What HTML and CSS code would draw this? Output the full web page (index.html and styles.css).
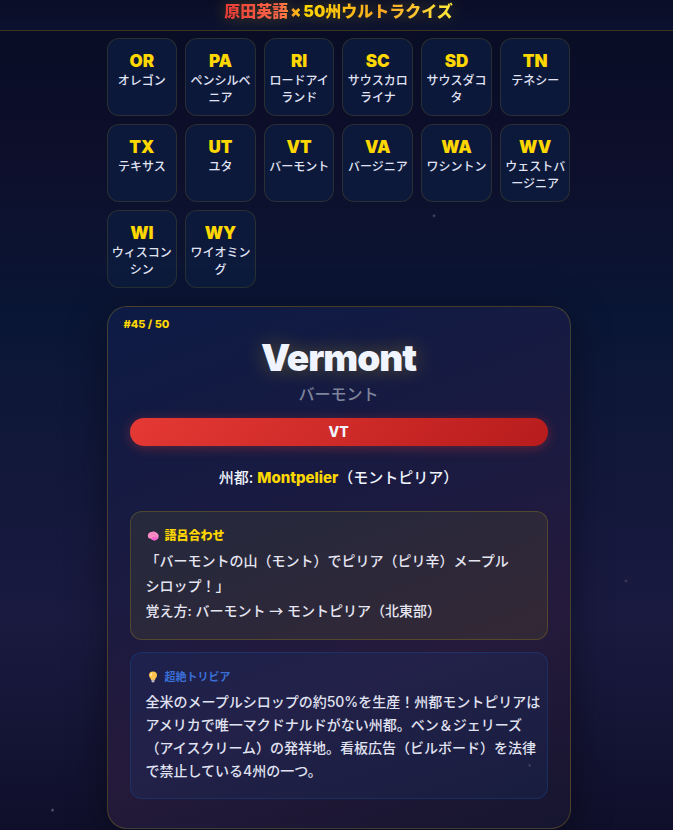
FILE: index.html
```html
<!DOCTYPE html>
<html lang="ja">
<head>
  <meta charset="UTF-8">
  <meta name="viewport" content="width=device-width, initial-scale=1.0">
  <title>原田英語×50州ウルトラクイズ</title>
  <link rel="stylesheet" href="styles.css">
</head>
<body>
  <!-- Header -->
  <header class="header">
    <h1 class="logo">原田英語<span class="times">×</span>50州ウルトラクイズ</h1>
  </header>

  <main class="container">
    <!-- State Grid -->
    <div class="state-grid">
      <button class="state-btn"><span class="abbr">OR</span><span class="name">オレゴン</span></button>
      <button class="state-btn"><span class="abbr">PA</span><span class="name">ペンシルベニア</span></button>
      <button class="state-btn"><span class="abbr">RI</span><span class="name">ロードアイランド</span></button>
      <button class="state-btn"><span class="abbr">SC</span><span class="name">サウスカロライナ</span></button>
      <button class="state-btn"><span class="abbr">SD</span><span class="name">サウスダコタ</span></button>
      <button class="state-btn"><span class="abbr">TN</span><span class="name">テネシー</span></button>
      <button class="state-btn"><span class="abbr">TX</span><span class="name">テキサス</span></button>
      <button class="state-btn"><span class="abbr">UT</span><span class="name">ユタ</span></button>
      <button class="state-btn"><span class="abbr">VT</span><span class="name">バーモント</span></button>
      <button class="state-btn"><span class="abbr">VA</span><span class="name">バージニア</span></button>
      <button class="state-btn"><span class="abbr">WA</span><span class="name">ワシントン</span></button>
      <button class="state-btn"><span class="abbr">WV</span><span class="name">ウェストバージニア</span></button>
      <button class="state-btn"><span class="abbr">WI</span><span class="name">ウィスコンシン</span></button>
      <button class="state-btn"><span class="abbr">WY</span><span class="name">ワイオミング</span></button>
    </div>

    <!-- Detail Card -->
    <article class="card">
      <div class="card-number">#45 / 50</div>
      <h2 class="state-en">Vermont</h2>
      <p class="state-ja">バーモント</p>
      <div class="badge">VT</div>
      <p class="capital">州都: <strong>Montpelier</strong>（モントピリア）</p>

      <section class="box goro">
        <h3 class="box-title">
          <svg class="icon" viewBox="0 0 24 24" aria-hidden="true">
            <path d="M2 13c-1-4 2-9 7-9 3-2 7-1 9 1 4 1 6 5 5 9 0 3-2 4-4 5-2 2-5 2-7 0-2 0-4-1-5-2-3 0-5-1-5-4z" fill="#ff8fc4"/>
            <path d="M8 17c3-2 8-3 14-2-1 3-3 5-6 6-4 0-7-1-8-4z" fill="#f55fd0"/>
            <path d="M5 13c1-3 3-4 5-3M9 6c2 0 3 2 2 4M14 5c-1 3 1 4 3 3M13 13c2-2 5-2 6 0M10 15h5" fill="none" stroke="#e068b4" stroke-width="1"/>
          </svg>
          語呂合わせ
        </h3>
        <p class="goro-text">「バーモントの山（モント）でピリア（ピリ辛）メープルシロップ！」<br>覚え方: バーモント <span class="arrow">→</span> モントピリア（北東部）</p>
      </section>

      <section class="box trivia">
        <h3 class="box-title">
          <svg class="icon" viewBox="0 0 24 24" aria-hidden="true">
            <path d="M12 1a8 8 0 0 0-8 8c0 4 4 5 4 9h8c0-4 4-5 4-9a8 8 0 0 0-8-8z" fill="#ffc44d"/>
            <path d="M10 4c-3 1-4 4-3 6 2 0 4-3 3-6z" fill="#fff3c4"/>
            <path d="M9 17h6v4l-2 2h-2l-2-2z" fill="#b9b4bd"/>
          </svg>
          超絶トリビア
        </h3>
        <p class="trivia-text">全米のメープルシロップの約50%を生産！州都モントピリアはアメリカで唯一マクドナルドがない州都。ベン＆ジェリーズ（アイスクリーム）の発祥地。看板広告（ビルボード）を法律で禁止している4州の一つ。</p>
      </section>
    </article>
  </main>
</body>
</html>
```
FILE: styles.css
```css
* {
  margin: 0;
  padding: 0;
  box-sizing: border-box;
}

body {
  min-height: 100vh;
  background: linear-gradient(180deg, #080c24 0%, #0d0f2b 19%, #0a1635 38%, #1a1a40 75%, #0f0f2b 100%);
  color: #f0f4ff;
  font-family: 'Inter', 'Noto Sans CJK JP', sans-serif;
}

/* faint stars */
body::before {
  content: '';
  position: fixed;
  inset: 0;
  z-index: 1;
  background:
    radial-gradient(circle at 64.5% 26%, rgba(255,255,255,0.3) 0, transparent 2px),
    radial-gradient(circle at 93% 70%, rgba(255,255,255,0.2) 0, transparent 2px),
    radial-gradient(circle at 78.7% 92.2%, rgba(255,255,255,0.2) 0, transparent 2px),
    radial-gradient(circle at 7.8% 97.6%, rgba(255,255,255,0.4) 0, transparent 2px);
  pointer-events: none;
}

.header {
  padding: 0 14px 7px 18px;
  text-align: center;
  background: linear-gradient(180deg, rgba(10,14,39,0.9), rgba(11,18,48,0.9));
  border-bottom: 1px solid rgba(255,215,0,0.2);
}

.logo {
  display: inline-block;
  font-size: 16px;
  font-weight: 900;
  line-height: 23px;
  background: linear-gradient(90deg, #e53935, #ff6b4a 25%, #ffd700 35%, #f9a825 70%, #ffeb3b);
  background-clip: text;
  -webkit-background-clip: text;
  color: transparent;
  filter: drop-shadow(0 0 8px rgba(255,215,0,0.3));
}

.times {
  padding: 0 2px;
}

.container {
  max-width: 496px;
  margin: 0 auto;
  padding: 7px 14px 0 18px;
}

.state-grid {
  display: grid;
  grid-template-columns: repeat(6, 1fr);
  gap: 8px;
  margin-bottom: 18px;
}

.state-btn {
  display: flex;
  flex-direction: column;
  align-items: center;
  padding: 12px 4px 9px;
  background: rgba(13,27,62,0.8);
  border: 1px solid rgba(255,215,0,0.12);
  border-radius: 12px;
  color: #e0e4f5;
  font-family: inherit;
  text-align: center;
  cursor: pointer;
}

.abbr {
  font-size: 17px;
  font-weight: 900;
  line-height: 21px;
  color: #ffd700;
}

.name {
  font-size: 12px;
  font-weight: 500;
  line-height: 17px;
}

.card {
  position: relative;
  padding: 28px 22px 29px;
  background: linear-gradient(160deg, #0d1b45 0%, #1c1a40 45%, #251a3b 68%, #16152f 100%);
  border: 1px solid rgba(255,215,0,0.2);
  border-radius: 20px;
  box-shadow: 0 8px 40px rgba(0,0,0,0.4);
}

.card-number {
  position: absolute;
  top: 10px;
  left: 16px;
  font-size: 11px;
  font-weight: 800;
  color: #ffd700;
}

.state-en {
  font-size: 37px;
  font-weight: 900;
  line-height: 46px;
  letter-spacing: -1px;
  text-align: center;
  text-shadow: 0 0 20px rgba(255,215,0,0.3);
}

.state-ja {
  margin-bottom: 10px;
  font-size: 16px;
  font-weight: 500;
  line-height: 27px;
  text-align: center;
  color: #7f849c;
}

.badge {
  margin-bottom: 18px;
  border-radius: 20px;
  background: linear-gradient(135deg, #e53935, #b71c1c);
  box-shadow: 0 2px 12px rgba(229,57,53,0.35);
  font-size: 14px;
  font-weight: 800;
  line-height: 28px;
  text-align: center;
}

.capital {
  margin-bottom: 20px;
  font-size: 15px;
  font-weight: 500;
  line-height: 27px;
  text-align: center;
}

.capital strong {
  font-weight: 800;
  color: #ffd700;
}

.box {
  padding: 14px 15px 16px;
  border-radius: 12px;
}

.goro {
  margin-bottom: 12px;
  padding-right: 28px;
  background: rgba(200,215,0,0.08);
  border: 1px solid rgba(255,215,0,0.18);
}

.trivia {
  padding-right: 6px;
  background: rgba(21,101,192,0.1);
  border: 1px solid rgba(21,101,192,0.25);
}

.box-title {
  display: flex;
  align-items: center;
  gap: 5px;
  margin-bottom: 2px;
  font-size: 12px;
  font-weight: 900;
  line-height: 20px;
  color: #ffd700;
}

.trivia .box-title {
  margin-bottom: 3px;
  font-size: 11px;
  font-weight: 700;
  color: #3a6fd8;
}

.icon {
  width: 14px;
  height: 12px;
}

.goro-text {
  font-size: 14px;
  font-weight: 500;
  line-height: 25px;
  color: #e6e6f2;
}

.arrow {
  font-family: 'Noto Sans CJK JP', sans-serif;
}

.trivia-text {
  font-size: 14px;
  font-weight: 500;
  line-height: 23px;
  color: #e0e3f2;
}
```
